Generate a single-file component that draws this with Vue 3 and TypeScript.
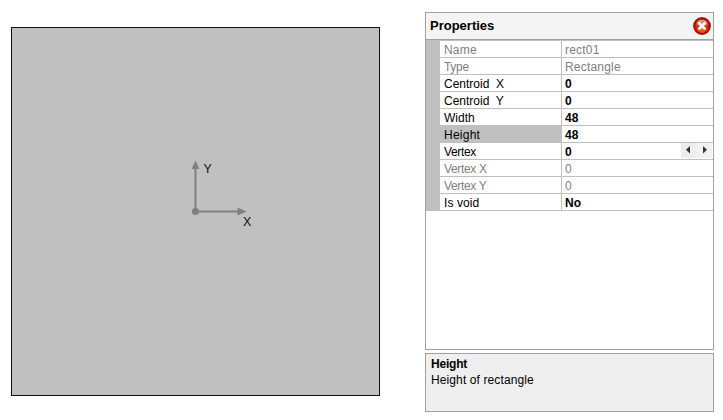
<script setup lang="ts">
interface Property {
  name: string
  value: string
  readonly?: boolean
  selected?: boolean
  stepper?: boolean
  tracking?: number
}

const properties: Property[] = [
  { name: 'Name', value: 'rect01', readonly: true, tracking: 0.2 },
  { name: 'Type', value: 'Rectangle', readonly: true, tracking: -0.3 },
  { name: 'Centroid  X', value: '0' },
  { name: 'Centroid  Y', value: '0' },
  { name: 'Width', value: '48' },
  { name: 'Height', value: '48', selected: true, tracking: 0.25 },
  { name: 'Vertex', value: '0', stepper: true, tracking: -0.35 },
  { name: 'Vertex X', value: '0', readonly: true, tracking: -0.35 },
  { name: 'Vertex Y', value: '0', readonly: true, tracking: -0.35 },
  { name: 'Is void', value: 'No', tracking: 0.1 },
]
</script>

<template>
  <main class="editor">
    <section class="shape">
      <svg class="axes" width="80" height="90" viewBox="0 0 80 90">
        <path d="M15.5 61.5V18M15.5 61.5H58" fill="none" stroke="#808080" stroke-width="2" />
        <path d="M15.5 10.5L19.4 19H11.6ZM66.5 61.5L57.5 65.5V57.5Z" fill="#808080" />
        <circle cx="15.5" cy="61.5" r="3.6" fill="#808080" />
        <text x="23.5" y="23">Y</text>
        <text x="63" y="76">X</text>
      </svg>
    </section>

    <aside class="side">
      <section class="panel">
        <header class="header">
          <h1 class="title">Properties</h1>
          <button class="close" aria-label="Close">
            <svg width="18" height="18" viewBox="0 0 18 18">
              <defs>
                <radialGradient id="glow" cx="50%" cy="72%" r="55%">
                  <stop offset="0" stop-color="#e8701a" />
                  <stop offset="0.6" stop-color="#c8350f" />
                  <stop offset="1" stop-color="#b0140c" />
                </radialGradient>
                <linearGradient id="shine" x1="0" y1="0" x2="0" y2="1">
                  <stop offset="0" stop-color="#fff" stop-opacity="0.6" />
                  <stop offset="1" stop-color="#fff" stop-opacity="0.15" />
                </linearGradient>
              </defs>
              <circle cx="9" cy="9" r="8" fill="url(#glow)" stroke="#b40808" stroke-width="1.8" />
              <path d="M2.6 8.2A6.5 6.5 0 0 1 15.4 8.2Q9 10 2.6 8.2Z" fill="url(#shine)" />
              <path d="M6.3 6.2L11.7 11.6M11.7 6.2L6.3 11.6" stroke="#fff" stroke-width="2.7" stroke-linecap="round" />
            </svg>
          </button>
        </header>
        <div class="grid">
          <div
            v-for="p in properties"
            :key="p.name"
            class="row"
            :class="{ readonly: p.readonly, selected: p.selected }"
          >
            <span class="name" :style="{ letterSpacing: `${p.tracking ?? 0}px` }">{{ p.name }}</span>
            <span class="value">{{ p.value }}</span>
            <span v-if="p.stepper" class="stepper">
              <svg class="step" width="15" height="15" viewBox="0 0 15 15">
                <path d="M9 3V10.4L5 6.7Z" fill="#333" />
              </svg>
              <svg class="step next" width="16" height="15" viewBox="0 0 16 15">
                <path d="M7 3V10.4L11 6.7Z" fill="#333" />
              </svg>
            </span>
          </div>
        </div>
      </section>
      <section class="help">
        <h2 class="help-title">Height</h2>
        <p class="help-text">Height of rectangle</p>
      </section>
    </aside>
  </main>
</template>

<style>
body {
  margin: 0;
  background: #fff;
}
</style>

<style scoped>
.editor {
  box-sizing: border-box;
  display: flex;
  align-items: flex-start;
  width: 723px;
  height: 420px;
  padding: 12px 9px 8px 11px;
  font-family: 'Liberation Sans', Arial, sans-serif;
  font-size: 12px;
  line-height: 16px;
  color: #000;
}
.shape {
  box-sizing: border-box;
  width: 369px;
  height: 369px;
  margin-top: 15px;
  padding: 122px 0 0 168px;
  border: 1px solid #111;
  background: #c0c0c0;
}
.axes {
  display: block;
}
.axes text {
  font-size: 12.5px;
  fill: #111;
}
.side {
  display: flex;
  flex-direction: column;
  gap: 3px;
  width: 289px;
  margin-left: 45px;
}
.panel {
  box-sizing: border-box;
  height: 338px;
  border: 1px solid #a0a0a0;
  background: #fff;
}
.header {
  box-sizing: border-box;
  display: flex;
  align-items: center;
  justify-content: space-between;
  height: 27px;
  padding: 0 2px 0 4px;
  border-bottom: 1px solid #a0a0a0;
  background: #f4f4f4;
}
.title {
  margin: 0;
  font-size: 13px;
  line-height: 26px;
}
.close {
  width: 18px;
  height: 18px;
  padding: 0;
  border: 0;
  background: none;
}
.close svg {
  display: block;
}
.grid {
  padding-left: 14px;
  border-top: 1px solid #c0c0c0;
  background: linear-gradient(#c0c0c0, #c0c0c0) 0 0 / 14px 100% no-repeat;
}
.row {
  display: flex;
  height: 16px;
  border-bottom: 1px solid #c0c0c0;
  background: #fff;
}
.name {
  box-sizing: border-box;
  width: 122px;
  padding-left: 4px;
  border-right: 1px solid #c0c0c0;
  line-height: 18px;
  white-space: pre;
}
.value {
  flex: 1;
  padding-left: 3px;
  font-weight: bold;
  line-height: 18px;
}
.readonly {
  color: #808080;
}
.readonly .value {
  font-weight: normal;
  letter-spacing: 0.2px;
}
.selected .name {
  background: #c0c0c0;
}
.stepper {
  display: flex;
  height: 15px;
  margin-right: 1px;
}
.step {
  background: #ededed;
}
.step.next {
  background: #f1f1f1;
}
.help {
  box-sizing: border-box;
  height: 59px;
  padding: 2px 5px;
  border: 1px solid #a0a0a0;
  background: #efefef;
}
.help-title,
.help-text {
  margin: 0;
  font-size: 12px;
  line-height: 16px;
}
.help-title {
  letter-spacing: -0.2px;
}
.help-text {
  letter-spacing: 0.11px;
}
</style>
